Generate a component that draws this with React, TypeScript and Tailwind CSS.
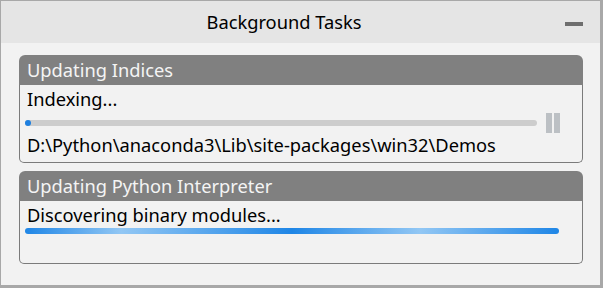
import React from "react";

const font = { fontFamily: '"Noto Sans", "Liberation Sans", sans-serif' };

export default function App() {
  return (
    <div
      className="w-[603px] h-[288px] flex flex-col bg-[#f2f2f2] border-l border-t border-r-[3px] border-b-[3px] border-[#a8a8a8] text-black"
      style={font}
    >
      <div className="h-[42px] shrink-0 flex items-center bg-[#e5e5e5]">
        <div className="flex-1 text-center text-[18.3px] leading-[24px] pl-[2px]">Background Tasks</div>
        <div className="w-[35px] h-full flex items-center">
          <div className="w-[18px] h-[4px] bg-[#6e6e6e] mt-[3px]" />
        </div>
      </div>
      <div className="flex flex-col pl-[18px] pr-[17px] pt-[12px] gap-[8px] text-[18.3px] leading-[24px]">
        <div className="flex flex-col">
          <div className="h-[30px] bg-[#808080] rounded-t-[6px] flex items-center px-[8px] text-[#f4f4f4]">
            Updating Indices
          </div>
          <div className="h-[78px] border border-t-0 border-[#7b7b7b] rounded-b-[5px] pt-[2px]">
            <div className="pl-[7px]">Indexing...</div>
            <div className="h-[20px] mt-[2px] flex items-center pl-[5px]">
              <div className="w-[512px] h-[6px] rounded-full bg-[#cdcdcd] relative">
                <div className="absolute left-0 top-0 w-[6px] h-[6px] rounded-full bg-[#1e80e0]" />
              </div>
              <div className="ml-[9px] flex gap-[2px] h-[20px]">
                <div className="w-[6px] h-full bg-[#bcc0c4]" />
                <div className="w-[6px] h-full bg-[#bcc0c4]" />
              </div>
            </div>
            <div className="pl-[7px]">D:\Python\anaconda3\Lib\site-packages\win32\Demos</div>
          </div>
        </div>
        <div className="flex flex-col">
          <div className="h-[30px] bg-[#808080] rounded-t-[6px] flex items-center px-[8px] text-[#f4f4f4]">
            Updating Python Interpreter
          </div>
          <div className="h-[63px] border border-t-0 border-[#7b7b7b] rounded-b-[5px] pt-[2px]">
            <div className="pl-[7px]">Discovering binary modules...</div>
            <div className="pl-[5px] mt-[1px]">
              <div
                className="w-[534px] h-[6px] rounded-full"
                style={{
                  background:
                    "linear-gradient(90deg, #1f86e6 0%, #92c7f4 18%, #1f86e6 50%, #92c7f4 74%, #1f86e6 100%)",
                }}
              />
            </div>
          </div>
        </div>
      </div>
    </div>
  );
}
